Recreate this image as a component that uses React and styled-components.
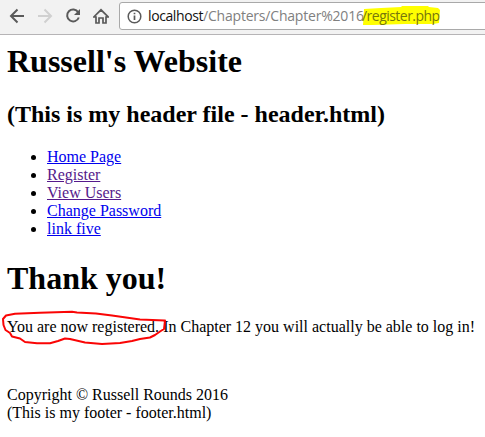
import React from 'react';
import styled, { createGlobalStyle } from 'styled-components';

const GlobalStyle = createGlobalStyle`
  html, body { margin: 0; background: #fff; overflow: hidden; }
`;

const Browser = styled.div`
  width: 485px;
  height: 437px;
  overflow: hidden;
  background: #fff;
`;

const Toolbar = styled.header`
  box-sizing: border-box;
  display: flex;
  align-items: flex-start;
  height: 35px;
  padding: 2px 0 0 9px;
  overflow: hidden;
  background: #f2f2f2;
  border-bottom: 1px solid #b6b4b6;
`;

const NavIcons = styled.div`
  display: flex;
  flex: none;
  gap: 12px;
  width: 110px;
  padding-top: 6px;
`;

const NavIcon = styled.svg`
  display: block;
  flex: none;
  width: 16px;
  height: 16px;
  fill: none;
  stroke: ${({ $disabled }) => ($disabled ? '#d0d0d0' : '#5a5a5a')};
  stroke-width: 2;
`;

const AddressBar = styled.div`
  box-sizing: border-box;
  display: flex;
  align-items: center;
  flex: none;
  width: 380px;
  height: 28px;
  padding-left: 7px;
  background: #fff;
  border: 1px solid #a9a9a9;
  border-radius: 3px;
`;

const InfoIcon = styled.svg`
  flex: none;
  width: 15px;
  height: 15px;
  margin-right: 6px;
  fill: none;
  stroke: #5a5a5a;
  stroke-width: 1.5;
`;

const Url = styled.div`
  display: flex;
  align-items: center;
  font: 14px/20px "Open Sans", sans-serif;
  white-space: nowrap;
  color: #808080;
`;

const UrlPart = styled.span`
  flex: none;
  width: ${({ $width }) => $width}px;
  color: ${({ $color }) => $color};
  letter-spacing: ${({ $spacing }) => $spacing}px;
`;

const Highlighted = styled(UrlPart)`
  position: relative;
  z-index: 0;
`;

const Marker = styled.svg`
  position: absolute;
  z-index: -1;
  left: 1px;
  top: 0;
  width: 78px;
  height: 20px;
  fill: #ff0;
`;

const Page = styled.main`
  padding: 8px 7px;
  font: 16px/18px "Liberation Serif", "Times New Roman", serif;
  color: #000;
`;

const Title = styled.h1`
  margin: 0 0 21px;
  font-size: 32px;
  line-height: 37px;
`;

const Subtitle = styled.h2`
  margin: 0 0 20px;
  font-size: 24px;
  line-height: 27px;
`;

const Links = styled.ul`
  margin: 0 0 22px;
  padding-left: 40px;
`;

const Link = styled.a`
  color: ${({ $visited }) => ($visited ? '#551a8b' : '#0000ee')};
  text-decoration: underline;
`;

const Message = styled.p`
  margin: 0 0 50px;
  white-space: nowrap;
`;

const Circled = styled.span`
  position: relative;
`;

const Scribble = styled.svg`
  position: absolute;
  left: -7px;
  top: -9px;
  width: 170px;
  height: 40px;
  fill: none;
  stroke: #fa0505;
  stroke-width: 2;
  stroke-linejoin: round;
  stroke-linecap: round;
`;

const Footer = styled.footer`
  display: flex;
  flex-direction: column;
`;

const LINKS = [
  { label: 'Home Page' },
  { label: 'Register', visited: true },
  { label: 'View Users', visited: true },
  { label: 'Change Password' },
  { label: 'link five' },
];

export default function App() {
  return (
    <Browser>
      <GlobalStyle />
      <Toolbar>
        <NavIcons>
          <NavIcon viewBox="0 0 16 16"><path d="M15 8H2M8.5 1.5L2 8L8.5 14.5" /></NavIcon>
          <NavIcon viewBox="0 0 16 16" $disabled><path d="M1 8H14M7.5 1.5L14 8L7.5 14.5" /></NavIcon>
          <NavIcon viewBox="0 0 16 16">
            <path d="M13.2 4.2A6 6 0 1 0 13.8 9.5" />
            <path d="M15 1V7H9Z" fill="#5a5a5a" stroke="none" />
          </NavIcon>
          <NavIcon viewBox="0 0 16 16"><path d="M.8 9L8 1.8L15.2 9H13V15H10V10H6V15H3V9Z" strokeWidth="1.7" /></NavIcon>
        </NavIcons>
        <AddressBar>
          <InfoIcon viewBox="0 0 15 15">
            <circle cx="7.5" cy="7.5" r="6.3" />
            <path d="M7.5 6.5V11M7.5 3.7V5.3" strokeWidth="1.7" />
          </InfoIcon>
          <Url>
            <UrlPart $width={55} $color="#111" $spacing={-0.4}>localhost</UrlPart>
            <UrlPart $width={159} $color="#808080" $spacing={-0.2}>/Chapters/Chapter%2016</UrlPart>
            <Highlighted $width={78} $color="#77770c" $spacing={-0.53}>
              <Marker viewBox="0 0 78 20"><path d="M1 3L18 2L38 1L39 0H65L66 1L75 2L77 4L76 17L70 18H43L42 18L10 19H0Z" /></Marker>
              /register.php
            </Highlighted>
          </Url>
        </AddressBar>
      </Toolbar>
      <Page>
        <Title>Russell's Website</Title>
        <Subtitle>(This is my header file - header.html)</Subtitle>
        <Links>
          {LINKS.map(({ label, visited }) => (
            <li key={label}><Link $visited={visited}>{label}</Link></li>
          ))}
        </Links>
        <Title>Thank you!</Title>
        <Message>
          <Circled>
            You are now registered.
            <Scribble viewBox="0 0 170 40">
              <path d="M164.500 11.500L140 10.500L112 6.500L96 4.500L77 3.500L72 2.800L40 3.700L15 4.700L6 6.500L3 10L3.500 16L5.500 21L10 24L12 27.500L20 29.500L25 33L37 34.300L50 34.200L58 32L65 29.500L70 30L85 33.500L102 35L120 34L132 32L140 30L150 28.500L155 26L160 22.500L164 20L165 11.500Z" />
            </Scribble>
          </Circled>
          {' In Chapter 12 you will actually be able to log in!'}
        </Message>
        <Footer>
          <span>Copyright © Russell Rounds 2016</span>
          <span>(This is my footer - footer.html)</span>
        </Footer>
      </Page>
    </Browser>
  );
}
